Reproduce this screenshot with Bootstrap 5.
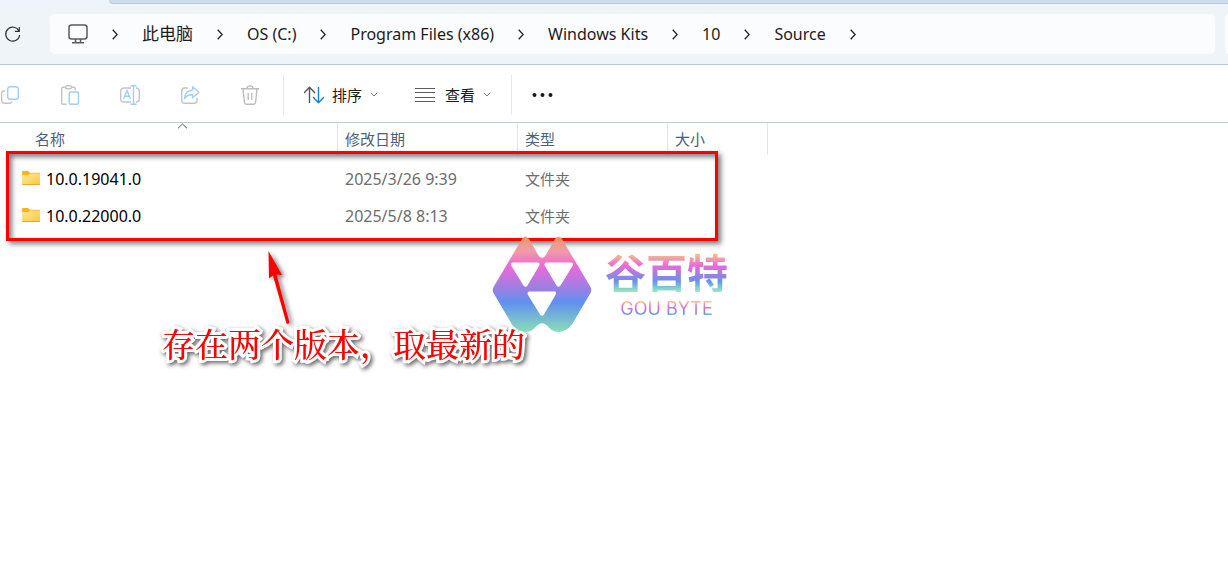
<!DOCTYPE html>
<html lang="zh-CN">
<head>
<meta charset="utf-8">
<meta name="viewport" content="width=device-width, initial-scale=1">
<title>Source</title>
<link rel="stylesheet" href="https://cdn.jsdelivr.net/npm/bootstrap@5.3.0/dist/css/bootstrap.min.css">
<style>
  body { font-family: "Noto Sans", "Noto Sans CJK SC", sans-serif; background: #fff; }
  svg { display: block; flex: none; }
  .tab-strip { height: 4px; background: #eef4f9; }
  .tab-strip div { height: 4px; margin-left: 109px; background: #cbdeeb; border-bottom: 1px solid #b8cbdb; border-bottom-left-radius: 4px; }
  .address-row { height: 61px; background: #eff4f9; border-bottom: 1px solid #b9cddd; }
  .address-box { height: 40px; background: #fbfcfe; border-radius: 5px; padding-left: 18px; margin: 0 10px 0 28px; }
  .search-box { width: 3px; height: 40px; background: #fbfcfe; border-radius: 5px 0 0 5px; }
  .crumbs { gap: 24px; font-size: 16px; line-height: 24px; color: #1b1b1b; }
  .crumbs li { gap: 24px; }
  .crumbs a { color: inherit; text-decoration: none; white-space: nowrap; }
  .crumbs .han { font-size: 17px; }
  .plain-btn { padding: 0; border: 0; background: none; color: #1b1b1b; font-size: 15px; line-height: 24px; }
  .commands { height: 58px; padding-top: 2px; border-bottom: 1px solid #b9cddd; }
  .faded { gap: 40px; }
  .divider { width: 1px; height: 40px; background: #e9e9e9; }
  .after-faded { margin-left: 23px; }
  .labelled { gap: 8px; }
  .near { margin-left: 20px; }
  .far { margin-left: 37px; }
  .files-pane { min-height: 400px; }
  .files { table-layout: fixed; width: 768px; font-size: 16px; line-height: 24px; border-collapse: separate; border-spacing: 0; }
  .files th { height: 32px; padding: 0 0 0 7px; font-size: 15px; line-height: 20px; font-weight: 400; color: #4c607a; border-right: 1px solid #e2e5e8; position: relative; }
  .files th:first-child { padding-left: 35px; }
  .files td { height: 37px; padding: 0 0 0 7px; color: #6d6d6d; vertical-align: middle; }
  .files td.kind { font-size: 15px; }
  .files td:first-child { padding-left: 22px; color: #000; }
  .files .spacer td { height: 5px; }
  .sort-mark { position: absolute; left: 177px; top: 0; }
  .callout-frame { position: absolute; left: 6px; top: 28px; width: 712px; height: 90px; border: 3px solid #f00; box-shadow: 3px 3px 5px rgba(0,0,0,.5), inset 3px 3px 5px rgba(0,0,0,.5); pointer-events: none; }
  .callout-arrow { position: absolute; left: 260px; top: 124px; filter: drop-shadow(3px 2px 2px rgba(0,0,0,.5)); }
  .callout-text { position: absolute; left: 162px; top: 196px; font-size: 33px; font-weight: 500; line-height: 48px; color: #f00; white-space: nowrap; font-family: "Noto Serif CJK SC", "Noto Sans CJK SC", serif; -webkit-text-stroke: 6px #fff; paint-order: stroke fill; filter: drop-shadow(2px 2px 2px rgba(0,0,0,.6)); }
  .brand { position: absolute; left: 492px; top: 112px; gap: 13px; opacity: .94; }
  .brand-name, .brand-latin { color: transparent; background: linear-gradient(#f0c080 10%, #ee62d4 36%, #9b78e0 58%, #5f8cec 74%, #8ae8b8 98%); background-clip: text; -webkit-background-clip: text; white-space: nowrap; }
  .brand-name { font-family: "Noto Sans CJK SC", sans-serif; font-weight: 700; font-size: 41px; line-height: 42px; }
  .brand-latin { font-family: Inter, sans-serif; font-size: 18px; line-height: 18px; }
</style>
</head>
<body>
<div class="tab-strip"><div></div></div>
<header class="address-row d-flex align-items-center">
  <button class="plain-btn ms-1" aria-label="刷新">
    <svg width="18" height="18" viewBox="0 0 18 18" fill="none" stroke="#333" stroke-width="1.2"><path d="M15 6A7 7 0 1 0 15.700 10M15.300 2V6.300H11"/></svg>
  </button>
  <nav class="address-box flex-grow-1 d-flex align-items-center" aria-label="路径">
    <ol class="crumbs list-unstyled d-flex align-items-center mb-0">
      <li class="d-flex align-items-center"><a href="#" aria-label="桌面"><svg width="20" height="20" viewBox="0 0 20 20" fill="none" stroke="#5a5a5a" stroke-width="1.5"><rect x="1" y="1" width="18" height="14" rx="2.5"/><path d="M7.500 15V18.500M12.500 15V18.500M4 18.800H16"/></svg></a><svg width="6" height="11" viewBox="0 0 6 11" fill="none" stroke="#222" stroke-width="1.300"><path d="M.7.7L5.200 5.500.7 10.300"/></svg></li>
      <li class="d-flex align-items-center"><a class="han" href="#">此电脑</a><svg width="6" height="11" viewBox="0 0 6 11" fill="none" stroke="#222" stroke-width="1.300"><path d="M.7.7L5.200 5.500.7 10.300"/></svg></li>
      <li class="d-flex align-items-center"><a href="#">OS (C:)</a><svg width="6" height="11" viewBox="0 0 6 11" fill="none" stroke="#222" stroke-width="1.300"><path d="M.7.7L5.200 5.500.7 10.300"/></svg></li>
      <li class="d-flex align-items-center"><a href="#">Program Files (x86)</a><svg width="6" height="11" viewBox="0 0 6 11" fill="none" stroke="#222" stroke-width="1.300"><path d="M.7.7L5.200 5.500.7 10.300"/></svg></li>
      <li class="d-flex align-items-center"><a href="#">Windows Kits</a><svg width="6" height="11" viewBox="0 0 6 11" fill="none" stroke="#222" stroke-width="1.300"><path d="M.7.7L5.200 5.500.7 10.300"/></svg></li>
      <li class="d-flex align-items-center"><a href="#">10</a><svg width="6" height="11" viewBox="0 0 6 11" fill="none" stroke="#222" stroke-width="1.300"><path d="M.7.7L5.200 5.500.7 10.300"/></svg></li>
      <li class="d-flex align-items-center"><a href="#">Source</a><svg width="6" height="11" viewBox="0 0 6 11" fill="none" stroke="#222" stroke-width="1.300"><path d="M.7.7L5.200 5.500.7 10.300"/></svg></li>
    </ol>
  </nav>
  <div class="search-box"></div>
</header>

<div class="commands d-flex align-items-center" role="toolbar" aria-label="命令">
  <div class="faded d-flex">
    <button class="plain-btn" aria-label="复制"><svg width="20" height="20" viewBox="0 0 20 20" fill="none" stroke-width="1.400"><path stroke="#c4c4c4" d="M5 6H4Q1.700 6 1.700 8.500V15Q1.700 18.300 5 18.300H9Q11.500 18.300 12 16.500"/><rect stroke="#9fd0f3" x="7.700" y="1.700" width="10.600" height="12.600" rx="2.500"/></svg></button>
    <button class="plain-btn" aria-label="粘贴"><svg width="20" height="20" viewBox="0 0 20 20" fill="none" stroke-width="1.400"><path stroke="#c4c4c4" d="M5 2.200H3Q1.700 2.200 1.700 3.500V18Q1.700 19.300 3 19.300H6.500M12 2.200H14Q15.300 2.200 15.300 4V5.200"/><rect stroke="#c4c4c4" x="5.500" y=".7" width="6" height="3" rx="1.500"/><rect stroke="#9fd0f3" x="9.200" y="7" width="9.300" height="12.300" rx="1.500"/></svg></button>
    <button class="plain-btn" aria-label="重命名"><svg width="20" height="20" viewBox="0 0 20 20" fill="none" stroke-width="1.400"><path stroke="#c4c4c4" d="M11 3H4Q.7 3 .7 6V14Q.7 17 4 17H11M16 3Q19.300 3 19.300 6V14Q19.300 17 16 17"/><path stroke="#9fd0f3" d="M13.500 1V19M10.500.8H16.500M10.500 19.200H16.500M3.500 14L7 5.500 10.500 14M4.700 11.300H9.300"/></svg></button>
    <button class="plain-btn" aria-label="共享"><svg width="20" height="20" viewBox="0 0 20 20" fill="none" stroke-width="1.400" stroke-linejoin="round"><path stroke="#c4c4c4" d="M8 3H4.500Q1.700 3 1.700 6V15Q1.700 18.300 5 18.300H14Q17 18.300 17 15.500V13"/><path stroke="#9fd0f3" d="M12.500 1.800L19 7.300 12.500 12.800V9.800Q7.500 9.500 4.500 13.500Q5 6 12.500 5Z"/></svg></button>
    <button class="plain-btn" aria-label="删除"><svg width="20" height="20" viewBox="0 0 20 20" fill="none" stroke="#bdbdbd" stroke-width="1.400"><path d="M1 3.700H19M7 3.500Q7 .9 10 .9T13 3.500M3 4L4.400 17.300Q4.600 19.200 6.400 19.200H13.600Q15.400 19.200 15.600 17.300L17 4M8.200 8V15M11.800 8V15"/></svg></button>
  </div>
  <div class="divider after-faded"></div>
  <button class="plain-btn labelled near d-flex align-items-center"><svg width="20" height="18" viewBox="1 0 20 18" fill="none" stroke-width="1.400"><path stroke="#555" d="M6.500 17V1.500M1 7L6.500 1.300 12 7"/><path stroke="#1680d8" d="M15.500 1V16.500M10 11L15.500 16.700 21 11"/></svg>排序<svg width="8" height="5" viewBox="0 0 8 5" fill="none" stroke="#777"><path d="M.8.8L4 4 7.200.8"/></svg></button>
  <button class="plain-btn labelled far d-flex align-items-center"><svg width="22" height="14" viewBox="0 0 22 14" stroke="#5c5c5c"><path d="M0 .5H20M0 4.500H20M0 9.500H20M0 13.500H20"/></svg>查看<svg width="8" height="5" viewBox="0 0 8 5" fill="none" stroke="#777"><path d="M.8.8L4 4 7.200.8"/></svg></button>
  <div class="divider near"></div>
  <button class="plain-btn near" aria-label="更多"><svg width="22" height="4" viewBox="0 0 22 4" fill="#1b1b1b"><circle cx="2.500" cy="2" r="2"/><circle cx="10.500" cy="2" r="2"/><circle cx="18.500" cy="2" r="2"/></svg></button>
</div>

<main class="files-pane position-relative">
  <svg width="0" height="0" class="position-absolute" aria-hidden="true">
    <defs>
      <linearGradient id="folderFill" x1="0" y1="0" x2="1" y2="1"><stop stop-color="#ffe9a0"/><stop offset="1" stop-color="#ffc638"/></linearGradient>
      <symbol id="folder" viewBox="0 0 18 15"><path fill="#f9b51b" d="M0 1Q0 0 1 0H6L8 1.700H17Q18 1.700 18 2.500V7H0Z"/><path fill="url(#folderFill)" d="M0 4H6.500L8 2.500H18V14H0Z"/><path stroke="#e7a92d" d="M.5 13.500H17.500"/></symbol>
    </defs>
  </svg>
  <table class="files">
    <colgroup><col style="width:338px"><col style="width:180px"><col style="width:150px"><col style="width:100px"></colgroup>
    <thead>
      <tr><th>名称<svg class="sort-mark" width="11" height="6" viewBox="0 0 11 6" fill="none" stroke="#555"><path d="M1 5.300L5.500 1 10 5.300"/></svg></th><th>修改日期</th><th>类型</th><th>大小</th></tr>
    </thead>
    <tbody>
      <tr class="spacer" aria-hidden="true"><td colspan="4"></td></tr>
      <tr><td><div class="d-flex align-items-center"><svg class="me-1" width="20" height="15"><use href="#folder" width="18" height="15"/></svg>10.0.19041.0</div></td><td>2025/3/26 9:39</td><td class="kind">文件夹</td><td></td></tr>
      <tr><td><div class="d-flex align-items-center"><svg class="me-1" width="20" height="15"><use href="#folder" width="18" height="15"/></svg>10.0.22000.0</div></td><td>2025/5/8 8:13</td><td class="kind">文件夹</td><td></td></tr>
    </tbody>
  </table>

  <div class="callout-frame"></div>
  <svg class="callout-arrow" width="40" height="82" viewBox="0 0 40 82"><path fill="#f00" d="M8.500 4L22 28 16.500 27.500 29.500 75.500Q28.500 77.500 26.500 76.500L13 28.500 9 31.500Z"/></svg>
  <div class="callout-text">存在两个版本，取最新的</div>

  <div class="brand d-flex align-items-center">
    <svg width="100" height="98" viewBox="0 0 100 98">
      <defs><linearGradient id="brandFill" x1="0" y1="0" x2="0" y2="1"><stop stop-color="#eda067"/><stop offset=".16" stop-color="#f093a4"/><stop offset=".31" stop-color="#ee5fd8"/><stop offset=".54" stop-color="#9678e2"/><stop offset=".69" stop-color="#568aee"/><stop offset="1" stop-color="#83ddb4"/></linearGradient></defs>
      <path fill="url(#brandFill)" fill-rule="evenodd" d="M30 4Q33.500-1 37 4L46.500 20.500Q50 25 53.500 20.500L63 4Q66.500-1 70 4L98.500 52Q100 55 98.500 58L80 89.500Q74 97 66 97 60 97 55 90.500 50 86 45 90.500 40 97 34 97 26 97 20 89.500L1.500 58Q0 55 1.500 52ZM21 27.500Q18 27.500 19.500 31L31.500 50.500Q33.500 53 35.500 50.500L47 31Q48.500 27.500 46 27.500ZM54.500 27.500Q51.500 27.500 53 31L64.500 50.500Q66.500 53 68.500 50.500L80.500 31Q82 27.500 79 27.500ZM37.500 56.500Q34.500 56.500 36 60L48 79.500Q50 82 52 79.500L63.500 60Q65 56.500 62.500 56.500Z"/>
    </svg>
    <div class="d-flex flex-column align-items-center gap-2"><span class="brand-name">谷百特</span><span class="brand-latin">GOU BYTE</span></div>
  </div>
</main>
<script src="https://cdn.jsdelivr.net/npm/bootstrap@5.3.0/dist/js/bootstrap.bundle.min.js"></script>
</body>
</html>
